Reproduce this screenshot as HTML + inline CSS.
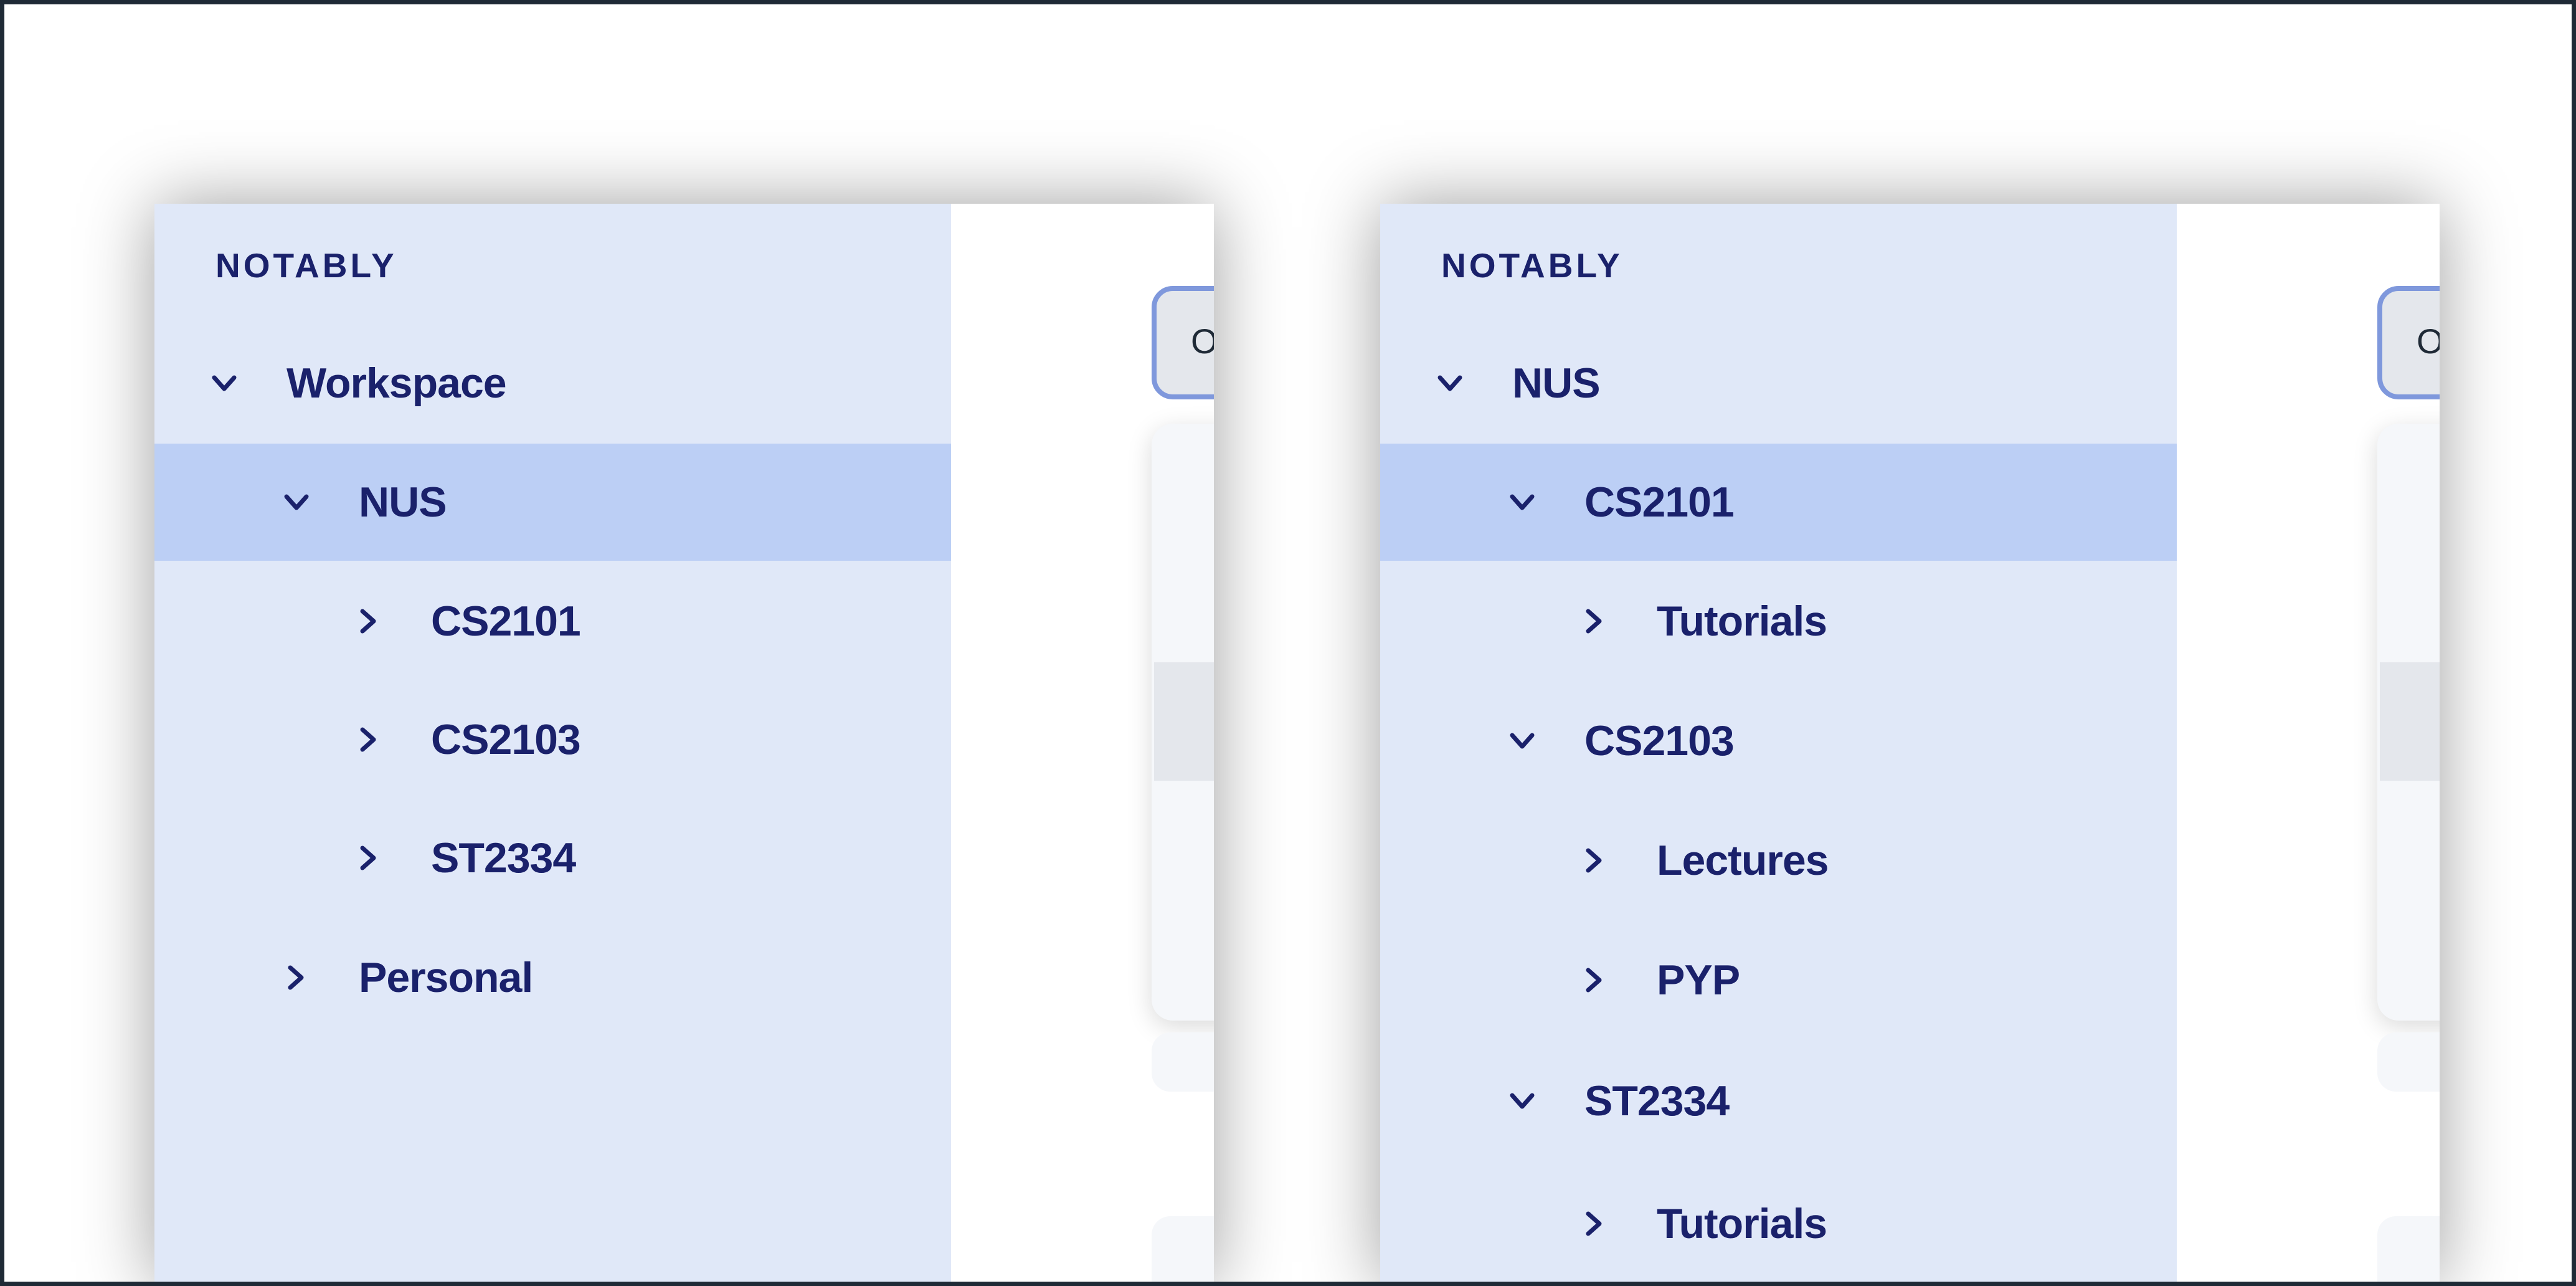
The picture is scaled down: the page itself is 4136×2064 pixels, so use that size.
<!DOCTYPE html>
<html><head><meta charset="utf-8"><style>
*{margin:0;padding:0;box-sizing:border-box}
html,body{width:4136px;height:2064px;overflow:hidden;background:#fff}
.frame{position:absolute;left:0;top:0;width:4136px;height:2064px;border:7px solid #1f2a36;overflow:hidden;background:#fff}
.panel{position:absolute;top:320px;width:1701px;height:1737px;background:#fff;box-shadow:0 0 110px rgba(0,0,0,.38);overflow:hidden}
.side{position:absolute;left:0;top:0;width:1279px;height:100%;background:#e0e8f8}
.logo{position:absolute;left:98px;top:67px;font:bold 55px "Liberation Sans",sans-serif;letter-spacing:5px;color:#1a216b}
.row{position:absolute;left:0;width:1279px;height:188px;font:bold 68px "Liberation Sans",sans-serif;color:#1a216b;letter-spacing:-1px}
.row.sel{background:#bccff5}
.row span{position:absolute;top:50%;transform:translateY(-50%);white-space:nowrap}
.row svg{position:absolute;top:50%;transform:translateY(-50%)}
.btn{position:absolute;left:1601px;top:132px;width:200px;height:182px;border:8px solid #7f98dc;border-radius:34px;background:#e4e7ec;font:56px "Liberation Sans",sans-serif;color:#1f2a36;padding:48px 0 0 55px}
.card{position:absolute;left:1601px;top:353px;width:200px;height:958px;background:#f5f7fa;border-radius:34px;box-shadow:0 10px 40px rgba(0,0,0,.15)}
.gray{position:absolute;left:4px;top:383px;width:196px;height:190px;background:#e4e7ec}
.c2{position:absolute;left:1601px;top:1330px;width:200px;height:95px;background:#f5f7fa;border-radius:30px}
.c3{position:absolute;left:1601px;top:1625px;width:200px;height:112px;background:#f5f7fa;border-radius:30px 30px 0 0}
</style></head><body><div class="frame">

<div class="panel" style="left:241px">
 <div class="side">
  <div class="logo">NOTABLY</div>
  <div class="row" style="top:194px"><svg style="left:92px" width="40" height="26" viewBox="0 0 40 26"><path d="M4 4 L20 22 L36 4" fill="none" stroke="#1a216b" stroke-width="7" stroke-linecap="round" stroke-linejoin="round"/></svg><span style="left:212px">Workspace</span></div>
  <div class="row sel" style="top:385px"><svg style="left:208px" width="40" height="26" viewBox="0 0 40 26"><path d="M4 4 L20 22 L36 4" fill="none" stroke="#1a216b" stroke-width="7" stroke-linecap="round" stroke-linejoin="round"/></svg><span style="left:328px">NUS</span></div>
  <div class="row" style="top:576px"><svg style="left:330px" width="26" height="40" viewBox="0 0 26 40"><path d="M4 4 L22 20 L4 36" fill="none" stroke="#1a216b" stroke-width="7" stroke-linecap="round" stroke-linejoin="round"/></svg><span style="left:444px">CS2101</span></div>
  <div class="row" style="top:766px"><svg style="left:330px" width="26" height="40" viewBox="0 0 26 40"><path d="M4 4 L22 20 L4 36" fill="none" stroke="#1a216b" stroke-width="7" stroke-linecap="round" stroke-linejoin="round"/></svg><span style="left:444px">CS2103</span></div>
  <div class="row" style="top:956px"><svg style="left:330px" width="26" height="40" viewBox="0 0 26 40"><path d="M4 4 L22 20 L4 36" fill="none" stroke="#1a216b" stroke-width="7" stroke-linecap="round" stroke-linejoin="round"/></svg><span style="left:444px">ST2334</span></div>
  <div class="row" style="top:1148px"><svg style="left:214px" width="26" height="40" viewBox="0 0 26 40"><path d="M4 4 L22 20 L4 36" fill="none" stroke="#1a216b" stroke-width="7" stroke-linecap="round" stroke-linejoin="round"/></svg><span style="left:328px">Personal</span></div>
 </div>
 <div class="btn">O</div>
 <div class="card"><div class="gray"></div></div>
 <div class="c2"></div><div class="c3"></div>
</div>

<div class="panel" style="left:2209px">
 <div class="side">
  <div class="logo">NOTABLY</div>
  <div class="row" style="top:194px"><svg style="left:92px" width="40" height="26" viewBox="0 0 40 26"><path d="M4 4 L20 22 L36 4" fill="none" stroke="#1a216b" stroke-width="7" stroke-linecap="round" stroke-linejoin="round"/></svg><span style="left:212px">NUS</span></div>
  <div class="row sel" style="top:385px"><svg style="left:208px" width="40" height="26" viewBox="0 0 40 26"><path d="M4 4 L20 22 L36 4" fill="none" stroke="#1a216b" stroke-width="7" stroke-linecap="round" stroke-linejoin="round"/></svg><span style="left:328px">CS2101</span></div>
  <div class="row" style="top:576px"><svg style="left:330px" width="26" height="40" viewBox="0 0 26 40"><path d="M4 4 L22 20 L4 36" fill="none" stroke="#1a216b" stroke-width="7" stroke-linecap="round" stroke-linejoin="round"/></svg><span style="left:444px">Tutorials</span></div>
  <div class="row" style="top:768px"><svg style="left:208px" width="40" height="26" viewBox="0 0 40 26"><path d="M4 4 L20 22 L36 4" fill="none" stroke="#1a216b" stroke-width="7" stroke-linecap="round" stroke-linejoin="round"/></svg><span style="left:328px">CS2103</span></div>
  <div class="row" style="top:960px"><svg style="left:330px" width="26" height="40" viewBox="0 0 26 40"><path d="M4 4 L22 20 L4 36" fill="none" stroke="#1a216b" stroke-width="7" stroke-linecap="round" stroke-linejoin="round"/></svg><span style="left:444px">Lectures</span></div>
  <div class="row" style="top:1152px"><svg style="left:330px" width="26" height="40" viewBox="0 0 26 40"><path d="M4 4 L22 20 L4 36" fill="none" stroke="#1a216b" stroke-width="7" stroke-linecap="round" stroke-linejoin="round"/></svg><span style="left:444px">PYP</span></div>
  <div class="row" style="top:1346px"><svg style="left:208px" width="40" height="26" viewBox="0 0 40 26"><path d="M4 4 L20 22 L36 4" fill="none" stroke="#1a216b" stroke-width="7" stroke-linecap="round" stroke-linejoin="round"/></svg><span style="left:328px">ST2334</span></div>
  <div class="row" style="top:1543px"><svg style="left:330px" width="26" height="40" viewBox="0 0 26 40"><path d="M4 4 L22 20 L4 36" fill="none" stroke="#1a216b" stroke-width="7" stroke-linecap="round" stroke-linejoin="round"/></svg><span style="left:444px">Tutorials</span></div>
 </div>
 <div class="btn">O</div>
 <div class="card"><div class="gray"></div></div>
 <div class="c2"></div><div class="c3"></div>
</div>

</div></body></html>
